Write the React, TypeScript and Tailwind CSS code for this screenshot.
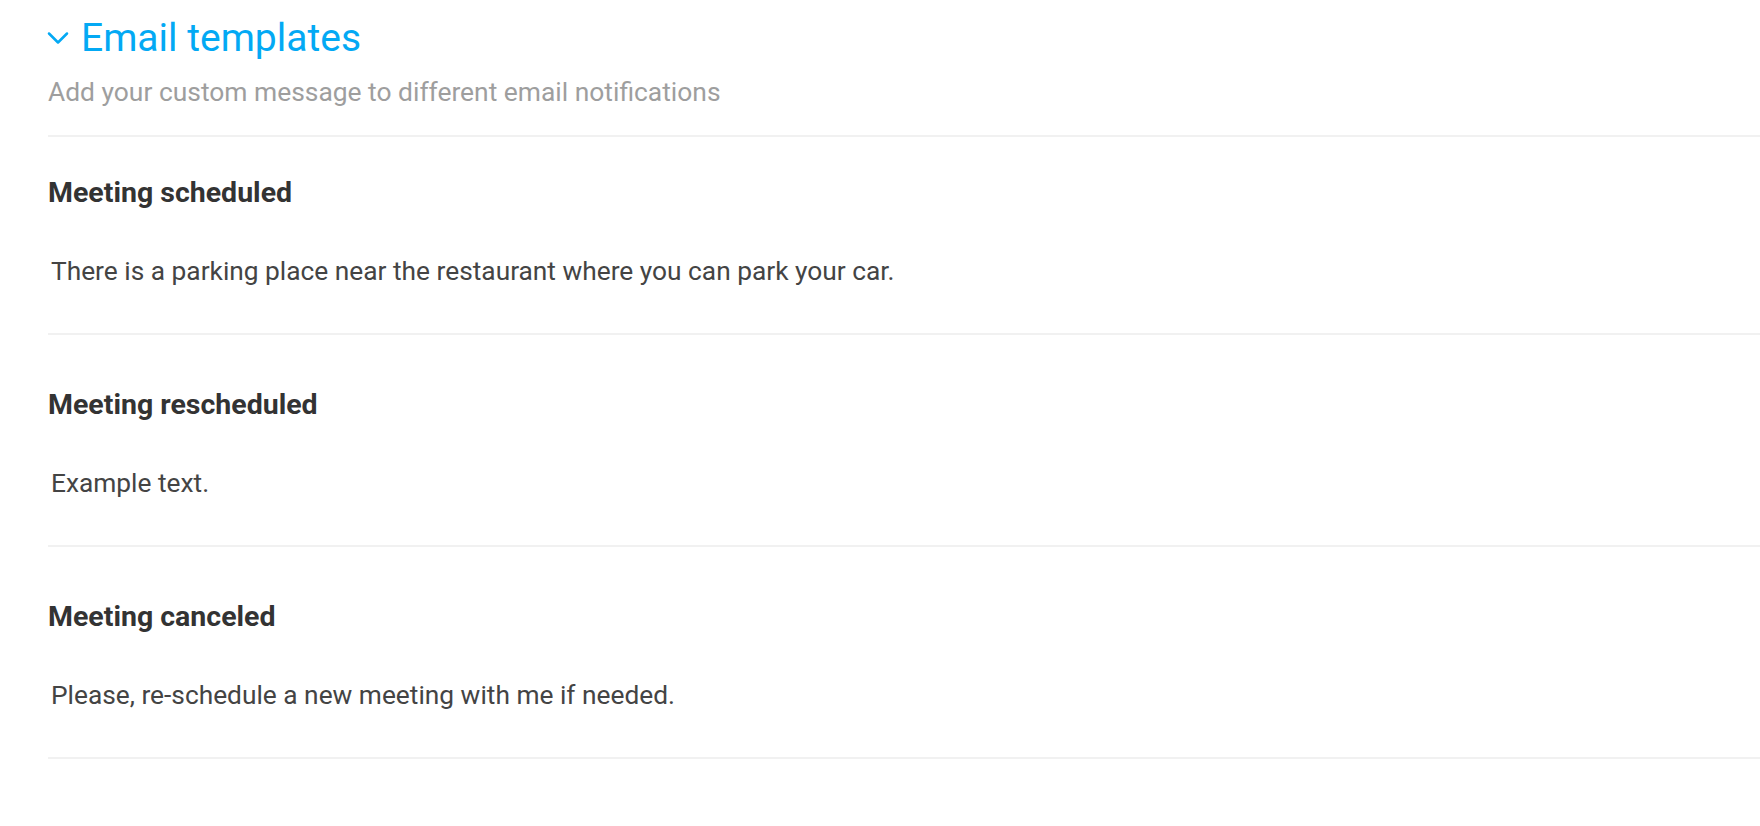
import { ChevronDown } from "lucide-react";

const templates = [
  {
    title: "Meeting scheduled",
    text: "There is a parking place near the restaurant where you can park your car.",
  },
  { title: "Meeting rescheduled", text: "Example text." },
  { title: "Meeting canceled", text: "Please, re-schedule a new meeting with me if needed." },
];

export default function App() {
  return (
    <div className="min-h-screen bg-white pl-[48px] font-['Roboto',sans-serif]">
      {/* Header */}
      <div className="pt-[16px] pb-[29px]">
        <div className="flex h-[44px] items-center">
          <ChevronDown size={36} strokeWidth={1.7} className="-ml-[8px] mr-[5px] text-[#03a9f4]" />
          <h1 className="text-[39px] leading-[44px] text-[#03a9f4]">Email templates</h1>
        </div>
        <p className="mt-[18px] text-[26.4px] leading-[28px] text-[#9e9e9e]">
          Add your custom message to different email notifications
        </p>
      </div>

      {/* Template list */}
      <div className="border-t-2 border-[#f1f1f1]">
        {templates.map((t, i) => (
          <div
            key={t.title}
            className={`border-b-2 border-[#f1f1f1] pb-[46px] ${i === 0 ? "pt-[40px]" : "pt-[54px]"}`}
          >
            <h3 className="text-[28.5px] leading-[32px] font-bold text-[#333333]">{t.title}</h3>
            <p className="mt-[46px] pl-[3px] text-[26.3px] leading-[32px] text-[#444444]">{t.text}</p>
          </div>
        ))}
      </div>
    </div>
  );
}
